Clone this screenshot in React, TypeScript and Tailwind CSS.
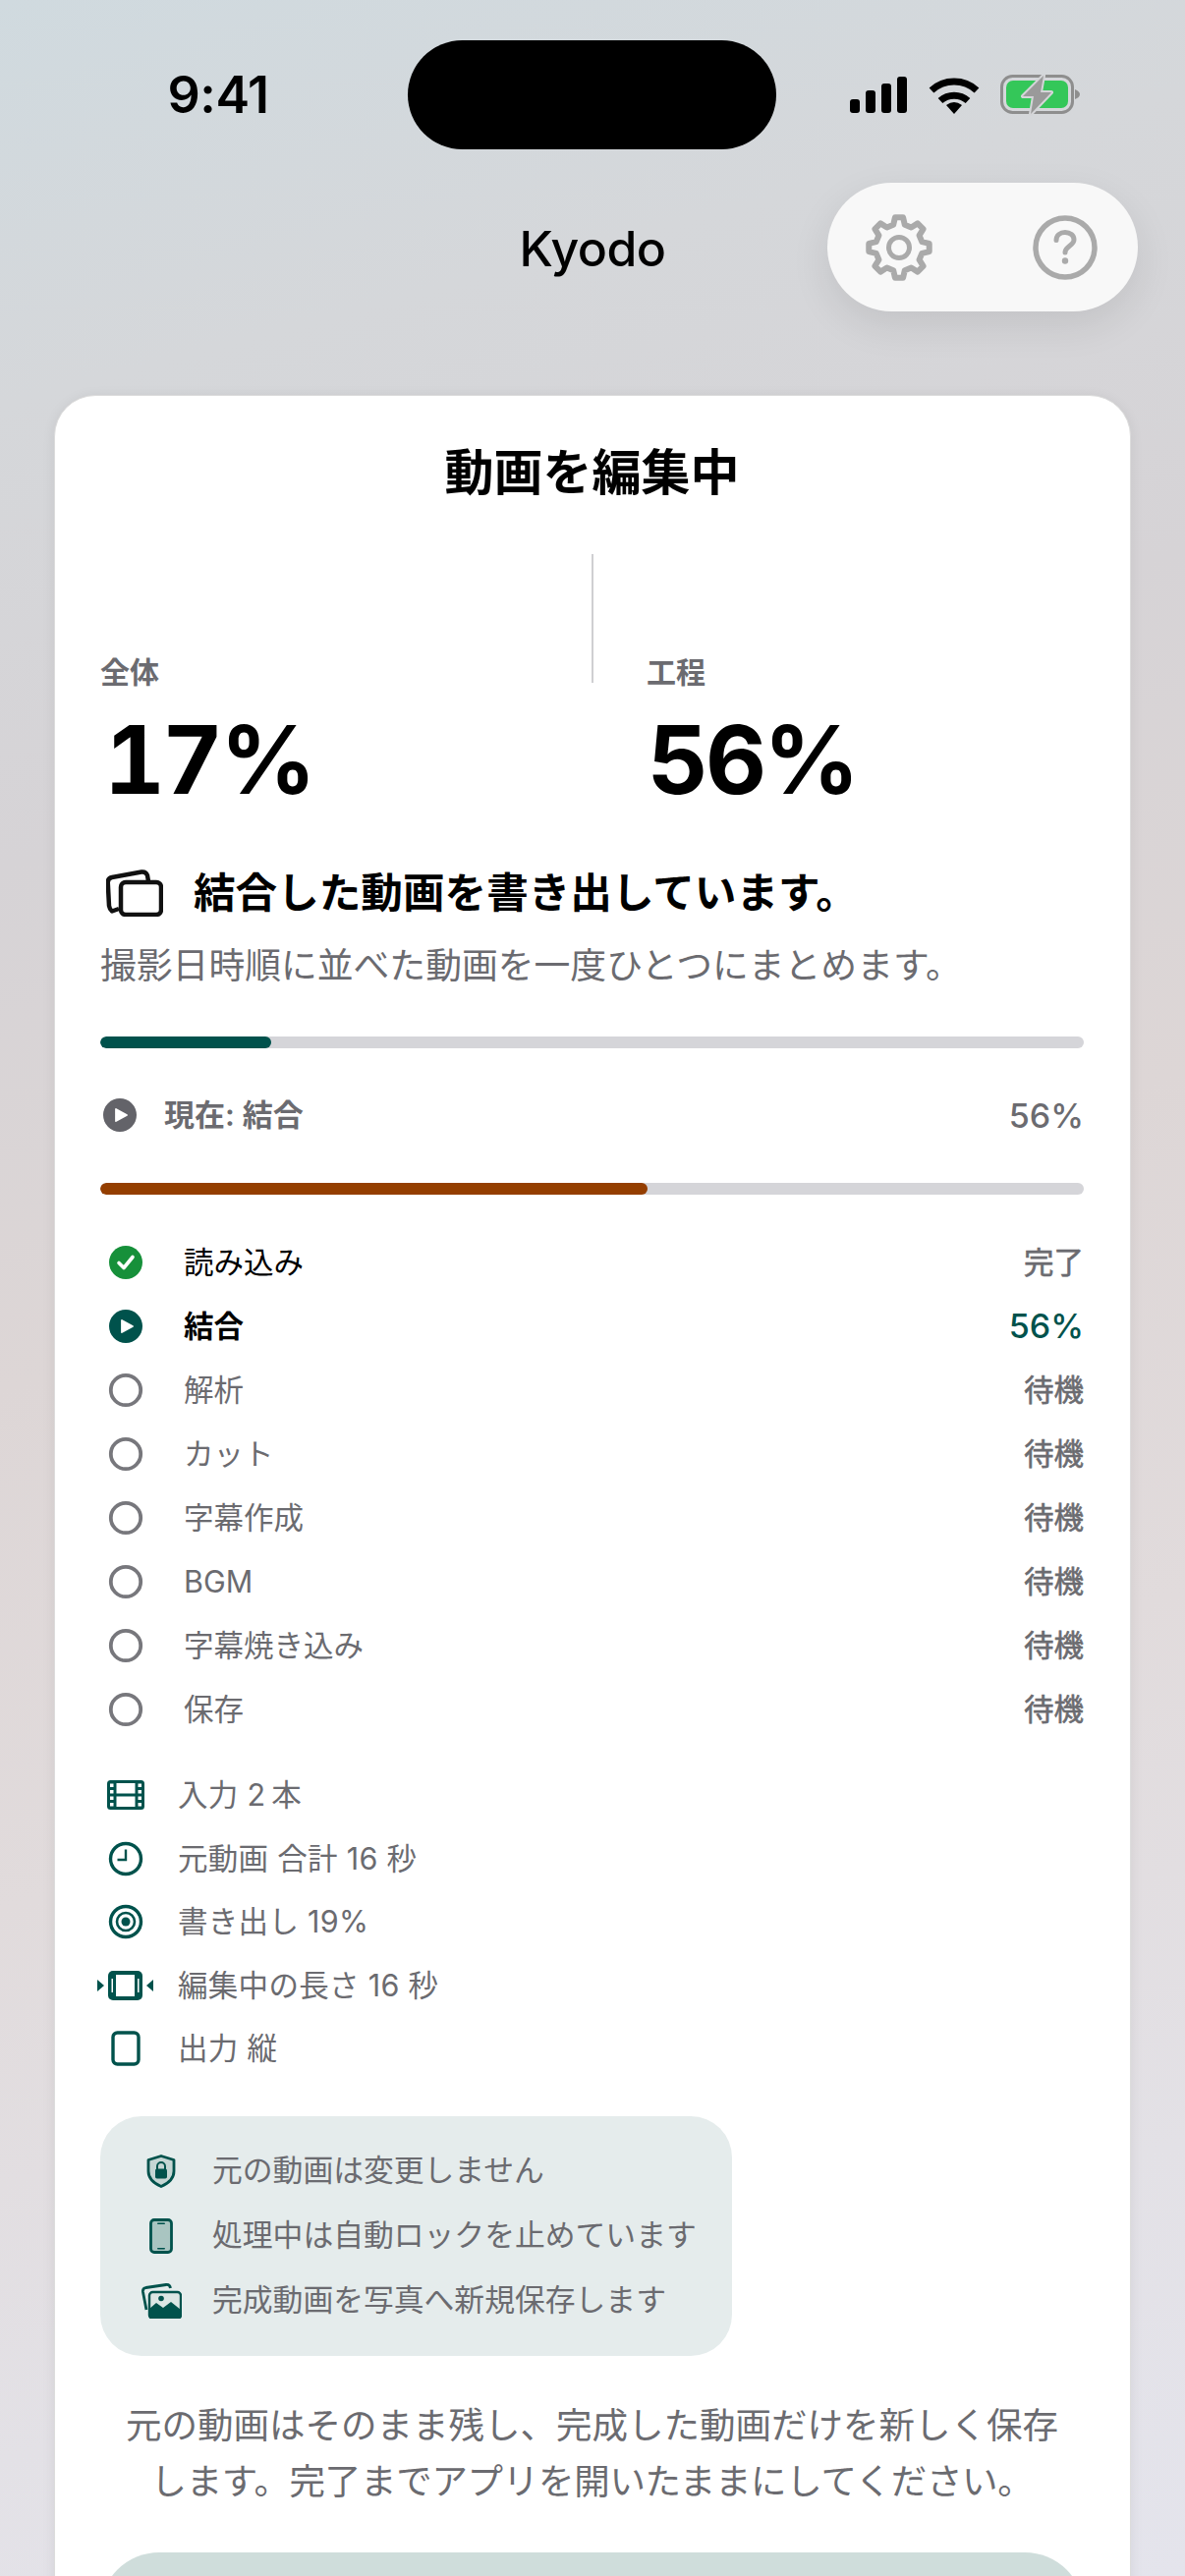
import React from "react";

const TEAL = "#00524c";

type StepState = "done" | "active" | "wait";

const STEPS: { label: string; value: string; state: StepState }[] = [
  { label: "読み込み", value: "完了", state: "done" },
  { label: "結合", value: "56%", state: "active" },
  { label: "解析", value: "待機", state: "wait" },
  { label: "カット", value: "待機", state: "wait" },
  { label: "字幕作成", value: "待機", state: "wait" },
  { label: "BGM", value: "待機", state: "wait" },
  { label: "字幕焼き込み", value: "待機", state: "wait" },
  { label: "保存", value: "待機", state: "wait" },
];

function gearPath(cx: number, cy: number, outer: number, root: number) {
  const pts: string[] = [];
  for (let i = 0; i < 8; i++) {
    const a = (i * 45 - 90) * (Math.PI / 180);
    [
      [-14, root],
      [-7.5, outer],
      [7.5, outer],
      [14, root],
    ].forEach(([d, r]) => {
      const t = a + (d * Math.PI) / 180;
      pts.push(`${(cx + r * Math.cos(t)).toFixed(2)} ${(cy + r * Math.sin(t)).toFixed(2)}`);
    });
  }
  return `M${pts.join("L")}Z`;
}

function Signal() {
  return (
    <svg width="58" height="37" viewBox="0 0 58 37" fill="#000">
      <rect x="0" y="23" width="10" height="14" rx="3" />
      <rect x="16" y="14" width="10" height="23" rx="3" />
      <rect x="32" y="7" width="10" height="30" rx="3" />
      <rect x="48" y="0" width="10" height="37" rx="3" />
    </svg>
  );
}

function Wifi() {
  return (
    <svg width="52" height="38" viewBox="0 0 52 38" fill="none" stroke="#000" strokeWidth="7">
      <path d="M3 14A34 34 0 0 1 49 14" />
      <path d="M12 24.5A21 21 0 0 1 40 24.5" />
      <path d="M18 29Q26 23 34 29L26 38Z" fill="#000" stroke="none" />
    </svg>
  );
}

function Battery() {
  return (
    <svg width="84" height="42" viewBox="0 0 84 42" fill="none">
      <rect x="1.5" y="1.5" width="72" height="37" rx="11" stroke="#8e8e8e" strokeWidth="3" />
      <rect x="6" y="6" width="63" height="28" rx="7" fill="#34c759" />
      <path d="M76 15c3 1 5 3 5 5s-2 4-5 5z" fill="#8e8e8e" />
      <path d="M44 1L23 22H34L31 40L52 18H41Z" fill="#9a9a9a" stroke="#d4d5d8" strokeWidth="4" paintOrder="stroke" strokeLinejoin="round" />
    </svg>
  );
}

function GearIcon() {
  return (
    <svg width="72" height="72" viewBox="0 0 72 72" fill="none" stroke="#aaaaaa" strokeWidth="6" strokeLinejoin="round">
      <path d={gearPath(36, 36, 31, 24)} />
      <circle cx="36" cy="36" r="10.5" strokeWidth="5" />
    </svg>
  );
}

function HelpIcon() {
  return (
    <svg width="68" height="68" viewBox="0 0 68 68" fill="none" stroke="#aaaaaa" strokeWidth="5.5" strokeLinecap="round">
      <circle cx="34" cy="34" r="30" />
      <path d="M25 26.500c0-5 4-8 9-8s9 3 9 7.500c0 6-9 6.500-9 13" strokeWidth="5" />
      <circle cx="34" cy="47.500" r="3.200" fill="#aaaaaa" stroke="none" />
    </svg>
  );
}

function StackIcon() {
  return (
    <svg width="58" height="48" viewBox="0 0 58 48" fill="none" stroke="#111" strokeWidth="4.500" strokeLinejoin="round">
      <path d="M13 40L6 42.500C4 41 3.500 40 3 37L1.800 14C1.500 10 3 8.500 6 8L36 2.500C39.500 2 41 3.500 42 6L43 12" />
      <rect x="15" y="13" width="41" height="33" rx="5" />
    </svg>
  );
}

function StepIcon({ state }: { state: StepState }) {
  if (state === "done") {
    return (
      <svg width="36" height="36" viewBox="0 0 36 36">
        <circle cx="18" cy="18" r="17" fill="#16903a" />
        <path d="M11 18.500L16 23.500L25 12.500" fill="none" stroke="#fff" strokeWidth="3.600" strokeLinecap="round" strokeLinejoin="round" />
      </svg>
    );
  }
  if (state === "active") {
    return <PlayDisc color={TEAL} />;
  }
  return (
    <svg width="36" height="36" viewBox="0 0 36 36">
      <circle cx="18" cy="18" r="15.200" fill="none" stroke="#77777c" strokeWidth="3.800" />
    </svg>
  );
}

function PlayDisc({ color }: { color: string }) {
  return (
    <svg width="36" height="36" viewBox="0 0 36 36">
      <circle cx="18" cy="18" r="17" fill={color} />
      <path d="M14 12L25 18L14 24Z" fill="#fff" stroke="#fff" strokeWidth="1.800" strokeLinejoin="round" />
    </svg>
  );
}

function FilmIcon() {
  return (
    <svg width="38" height="30" viewBox="0 0 38 30">
      <rect width="38" height="30" rx="3.500" fill={TEAL} />
      <rect x="9.500" y="3" width="19" height="10.500" fill="#fff" />
      <rect x="9.500" y="16.500" width="19" height="10.500" fill="#fff" />
      {[3.500, 10, 16.500, 23].map((y) => (
        <g key={y} fill="#fff">
          <rect x="3" y={y} width="3.500" height="3.500" />
          <rect x="31.500" y={y} width="3.500" height="3.500" />
        </g>
      ))}
    </svg>
  );
}

function ClockIcon() {
  return (
    <svg width="36" height="36" viewBox="0 0 36 36" fill="none" stroke={TEAL} strokeWidth="3.400">
      <circle cx="18" cy="18" r="15.500" />
      <path d="M18 8.500V19H9.500" strokeWidth="2.400" />
    </svg>
  );
}

function TargetIcon() {
  return (
    <svg width="36" height="36" viewBox="0 0 36 36" fill="none" stroke={TEAL} strokeWidth="3.400">
      <circle cx="18" cy="18" r="15.500" />
      <circle cx="18" cy="18" r="9" strokeWidth="2.600" />
      <circle cx="18" cy="18" r="4.500" fill={TEAL} stroke="none" />
    </svg>
  );
}

function TrimIcon() {
  return (
    <svg width="58" height="30" viewBox="0 0 58 30">
      <path d="M0 9L7 15L0 21Z" fill={TEAL} />
      <path d="M57 9L50 15L57 21Z" fill={TEAL} />
      <rect x="11" y="0" width="35" height="30" rx="5" fill={TEAL} />
      <rect x="19" y="4" width="19" height="22" fill="#fff" />
      <rect x="14.500" y="8" width="1.500" height="14" fill="#fff" />
      <rect x="41" y="8" width="1.500" height="14" fill="#fff" />
    </svg>
  );
}

function PortraitIcon() {
  return (
    <svg width="30" height="36" viewBox="0 0 30 36">
      <rect x="2" y="2" width="26" height="32" rx="4.500" fill="none" stroke={TEAL} strokeWidth="3.400" />
    </svg>
  );
}

function ShieldIcon() {
  return (
    <svg width="30" height="34" viewBox="0 0 30 34">
      <path d="M15 1.500L28 5.500V17C28 24 22 29.500 15 32.500C8 29.500 2 24 2 17V5.500Z" fill="#c5d6d4" stroke={TEAL} strokeWidth="2.800" strokeLinejoin="round" />
      <rect x="9" y="14.500" width="12" height="10" rx="1.800" fill={TEAL} />
      <path d="M11 15V12a4 4 0 0 1 8 0V15" fill="none" stroke={TEAL} strokeWidth="2" />
    </svg>
  );
}

function PhoneIcon() {
  return (
    <svg width="24" height="36" viewBox="0 0 24 36">
      <rect x="1.500" y="1.500" width="21" height="33" rx="3.500" fill="#a9c5c1" stroke={TEAL} strokeWidth="2.800" />
      <rect x="8" y="4.500" width="8" height="1.600" rx="0.800" fill={TEAL} />
      <rect x="8" y="30" width="8" height="1.600" rx="0.800" fill={TEAL} />
    </svg>
  );
}

function PhotosIcon() {
  return (
    <svg width="42" height="36" viewBox="0 0 42 36">
      <path d="M6 27L2.500 9C2 6 3 5 5.500 4.500L26 1.500C28.500 1.200 30 2 30.500 5" fill="none" stroke={TEAL} strokeWidth="2.800" strokeLinejoin="round" />
      <rect x="9" y="9" width="32" height="27" rx="3.500" fill="#dbe6e4" stroke={TEAL} strokeWidth="2.400" />
      <circle cx="21" cy="15.500" r="2.800" fill={TEAL} />
      <path d="M9 32V26L16 20L23 25L31 19L41 27V32C41 34.500 39.500 36 37 36H13C10.500 36 9 34.500 9 32Z" fill={TEAL} />
    </svg>
  );
}

function Bar({ width, color }: { width: number; color: string }) {
  return (
    <div className="h-[12px] w-full overflow-hidden rounded-[6px] bg-[#d5d5d9]">
      <div className="h-full rounded-[6px]" style={{ width: `${width}%`, backgroundColor: color }} />
    </div>
  );
}

export default function App() {
  return (
    <div className="h-[2622px] w-[1206px] overflow-hidden bg-[linear-gradient(165deg,#d0dadf_0%,#d5d7da_14%,#d6d3d6_30%,#ddd6d6_48%,#e1dbdc_66%,#e3e1e6_85%,#e4e4ec_100%)] font-['Inter','Noto_Sans_CJK_JP',sans-serif] text-black">
      {/* status bar */}
      <div className="mt-[41px] flex h-[111px] items-center">
        <div className="w-[415px] pl-[29px] text-center text-[52px] font-semibold leading-none tracking-[-0.5px]">9:41</div>
        <div className="h-[111px] w-[375px] rounded-[56px] bg-black" />
        <div className="flex items-center pl-[75px]">
          <Signal />
          <div className="ml-[22px]"><Wifi /></div>
          <div className="ml-[21px]"><Battery /></div>
        </div>
      </div>

      {/* nav */}
      <div className="mt-[34px] grid h-[131px] grid-cols-[1fr_auto_1fr] items-center">
        <div />
        <div className="pt-[2px] text-[50px] font-medium leading-none tracking-[-0.5px]">Kyodo</div>
        <div className="flex justify-end pr-[48px]">
          <div className="flex h-[131px] w-[316px] items-center rounded-[66px] bg-[#f8f8f8] pl-[37px] shadow-[0_14px_40px_rgba(0,0,0,0.09)]">
            <GearIcon />
            <div className="ml-[99px]"><HelpIcon /></div>
          </div>
        </div>
      </div>

      {/* card */}
      <div className="mx-[55px] mt-[85px] rounded-[42px] border border-[#dcdcdc] bg-white pl-[46px] pr-[47px] shadow-[0_2px_14px_rgba(0,0,0,0.07)]">
        <h1 className="pt-[48px] text-center text-[50px] font-bold leading-[60px]">動画を編集中</h1>

        <div className="mt-[53px] flex">
          <div className="flex w-[502px] justify-between">
            <div className="pt-[105px]">
              <div className="text-[30px] font-semibold leading-[30px] text-[#6b6b70]">全体</div>
              <div className="ml-[4px] mt-[24px] text-[96px] font-bold leading-[100px] tracking-[-3px] tabular-nums">17%</div>
            </div>
            <div className="h-[131px] w-[2px] bg-[#cfcfd2]" />
          </div>
          <div className="ml-[54px] pt-[105px]">
            <div className="text-[30px] font-semibold leading-[30px] text-[#6b6b70]">工程</div>
            <div className="ml-[1px] mt-[24px] text-[96px] font-bold leading-[100px] tracking-[-3px] tabular-nums">56%</div>
          </div>
        </div>

        <div className="mt-[60px] flex h-[50px] items-center pt-[2px]">
          <div className="ml-[6px] w-[89px]"><StackIcon /></div>
          <div className="text-[42.600px] font-bold leading-[50px]">結合した動画を書き出しています。</div>
        </div>
        <p className="mt-[25px] text-[36.800px] leading-[50px] text-[#6b6b70]">撮影日時順に並べた動画を一度ひとつにまとめます。</p>

        <div className="mt-[47px]"><Bar width={17.4} color={TEAL} /></div>

        <div className="mt-[48px] flex h-[40px] items-center justify-between">
          <div className="flex items-center">
            <div className="ml-[2px] w-[63px]"><PlayDisc color="#636369" /></div>
            <span className="text-[31px] font-semibold text-[#6b6b70]">現在: 結合</span>
          </div>
          <span className="text-[34px] font-medium text-[#6b6b70]">56%</span>
        </div>

        <div className="mt-[49px]"><Bar width={55.6} color="#943e00" /></div>

        <div className="mt-[36px]">
          {STEPS.map((s) => (
            <div key={s.label} className="flex h-[65px] items-center justify-between">
              <div className="flex items-center">
                <div className="ml-[8px] w-[77px]"><StepIcon state={s.state} /></div>
                <span
                  className={
                    s.state === "done"
                      ? "text-[30.500px] text-black"
                      : s.state === "active"
                        ? "text-[30.500px] font-bold text-black"
                        : "text-[30.500px] text-[#6b6b70]"
                  }
                >
                  {s.label}
                </span>
              </div>
              <span
                className={
                  s.state === "active"
                    ? "text-[34px] font-medium text-[#00524c]"
                    : "text-[30.500px] font-normal text-[#6b6b70] [-webkit-text-stroke:0.6px_#6b6b70]"
                }
              >
                {s.value}
              </span>
            </div>
          ))}
        </div>

        <div className="mt-[23px] text-[30.500px] tracking-[0.3px] text-[#6b6b70]">
          {[
            { icon: <FilmIcon />, text: "入力 2\u2009本" },
            { icon: <ClockIcon />, text: "元動画 合計 16 秒" },
            { icon: <TargetIcon />, text: "書き出し 19%" },
            { icon: <TrimIcon />, text: "編集中の長さ 16 秒" },
            { icon: <PortraitIcon />, text: "出力 縦" },
          ].map((m) => (
            <div key={m.text} className="flex h-[64.500px] items-center">
              <div className="-ml-[4px] mr-[23px] flex w-[60px] justify-center">{m.icon}</div>
              <span>{m.text}</span>
            </div>
          ))}
        </div>

        <div className="mt-[36px] h-[244px] w-[643px] rounded-[42px] bg-[#e5ecec] pt-[23px] text-[30.800px] text-[#6b6b70]">
          {[
            { icon: <ShieldIcon />, text: "元の動画は変更しません" },
            { icon: <PhoneIcon />, text: "処理中は自動ロックを止めています" },
            { icon: <PhotosIcon />, text: "完成動画を写真へ新規保存します" },
          ].map((m) => (
            <div key={m.text} className="flex h-[66px] items-center">
              <div className="flex w-[114px] justify-center pl-[10px]">{m.icon}</div>
              <span>{m.text}</span>
            </div>
          ))}
        </div>

        <p className="mt-[43px] text-center text-[36.500px] leading-[57px] text-[#6b6b70]">
          元の動画はそのまま残し、完成した動画だけを新しく保存
          <br />
          <span className="tracking-[-0.3px]">します。完了までアプリを開いたままにしてください。</span>
        </p>

        <div className="mt-[43px] h-[200px] rounded-[60px] bg-[#cfdddb]" />
      </div>
    </div>
  );
}
